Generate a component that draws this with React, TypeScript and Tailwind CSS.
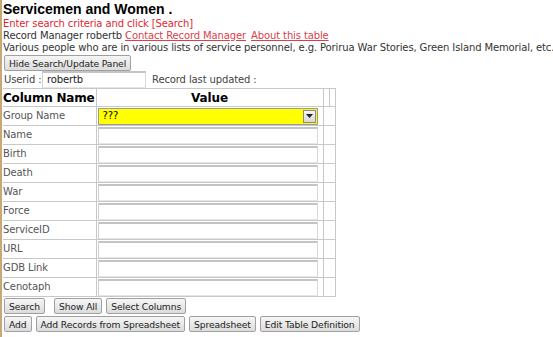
import React from 'react';

const fields = ['Name', 'Birth', 'Death', 'War', 'Force', 'ServiceID', 'URL', 'GDB Link', 'Cenotaph'];

const Btn: React.FC<{ label: string }> = ({ label }) => (
  <button className="h-[16px] px-[4px] border border-[#a0a0a0] rounded-[2px] bg-gradient-to-b from-[#f6f6f6] to-[#dcdcdc] text-[9.2px] leading-[13px] tracking-[-0.1px] text-[#222] whitespace-nowrap">
    {label}
  </button>
);

const Input: React.FC<{ className?: string; value?: string }> = ({ className = '', value = '' }) => (
  <div
    className={
      'h-[17px] bg-white border-t-2 border-l border-r border-b border-t-[#c4c4c4] border-l-[#d0d0d0] border-r-[#d8d8d8] border-b-[#e6e6e6] text-[10px] leading-[14px] text-[#222] pl-[4px] ' +
      className
    }
  >
    {value}
  </div>
);

export default function App() {
  return (
    <div className="h-[337px] w-[553px] overflow-hidden bg-white border-l-2 border-[#c9a878] pl-[1px] text-[#333] font-['DejaVu_Sans',Verdana,sans-serif] text-[10px] leading-[12px] tracking-[-0.12px]">
      <h1 className="font-['Liberation_Sans',Arial,sans-serif] font-bold text-[14px] leading-[18px] tracking-normal text-black">
        Servicemen and Women .
      </h1>
      <div className="text-[#e3262e]">Enter search criteria and click [Search]</div>
      <div className="text-[#333]">
        Record Manager robertb{' '}
        <a className="text-[#d9414a] underline">Contact Record Manager</a>
        <span className="ml-[5px]" />
        <a className="text-[#d9414a] underline">About this table</a>
      </div>
      <div className="text-[#333] whitespace-nowrap">
        Various people who are in various lists of service personnel, e.g. Porirua War Stories, Green Island Memorial, etc.
      </div>
      <div className="flex mt-[1px] ml-[1px]">
        <Btn label="Hide Search/Update Panel" />
      </div>
      <div className="flex items-center h-[17px] text-[#444]">
        <span className="w-[39px] pl-[1px] whitespace-nowrap">Userid :</span>
        <Input className="w-[104px]" value="robertb" />
        <span className="ml-[6px] whitespace-nowrap">Record last updated :</span>
      </div>
      <table className="border-collapse">
        <thead>
          <tr className="h-[18px]">
            <th className="w-[93px] border border-[#c8c8c8] border-l-0 text-left font-bold text-[12px] leading-[16px] tracking-[-0.2px] text-black p-0 whitespace-nowrap">
              Column Name
            </th>
            <th className="w-[227px] border border-[#c8c8c8] text-center font-bold text-[12px] leading-[16px] text-black p-0">
              Value
            </th>
            <th className="w-[6px] border border-[#c8c8c8] p-0" />
            <th className="w-[6px] border border-[#c8c8c8] p-0" />
          </tr>
        </thead>
        <tbody>
          <tr className="h-[19px]">
            <td className="border border-[#c8c8c8] border-l-0 text-[#555] p-0">Group Name</td>
            <td className="border border-[#c8c8c8] p-0 align-middle">
              <div className="flex items-center h-[17px] w-[220px] ml-[1px] bg-[#ffff00] border border-[#9a9a9a] leading-[14px] text-black pl-[4px]">
                <span className="flex-1">???</span>
                <span className="w-[13px] h-[13px] mr-[1px] border border-[#8a8a8a] bg-gradient-to-b from-[#f4f4f4] to-[#d8d8d8] flex items-center justify-center">
                  <svg width="7" height="4" viewBox="0 0 7 4">
                    <path d="M0 0h7L3.5 4z" fill="#222" />
                  </svg>
                </span>
              </div>
            </td>
            <td className="border border-[#c8c8c8] p-0" colSpan={2} />
          </tr>
          {fields.map((f) => (
            <tr key={f} className="h-[19px]">
              <td className="border border-[#c8c8c8] border-l-0 text-[#555] p-0">{f}</td>
              <td className="border border-[#c8c8c8] p-0 align-middle">
                <Input className="w-[220px] ml-[1px]" />
              </td>
              <td className="border border-[#c8c8c8] p-0" colSpan={2} />
            </tr>
          ))}
        </tbody>
      </table>
      <div className="flex gap-[4px] mt-[1px] ml-[1px]">
        <Btn label="Search" />
        <span className="w-px" />
        <Btn label="Show All" />
        <Btn label="Select Columns" />
      </div>
      <div className="flex gap-[4px] mt-[2px] ml-[1px]">
        <Btn label="Add" />
        <Btn label="Add Records from Spreadsheet" />
        <Btn label="Spreadsheet" />
        <Btn label="Edit Table Definition" />
      </div>
    </div>
  );
}
